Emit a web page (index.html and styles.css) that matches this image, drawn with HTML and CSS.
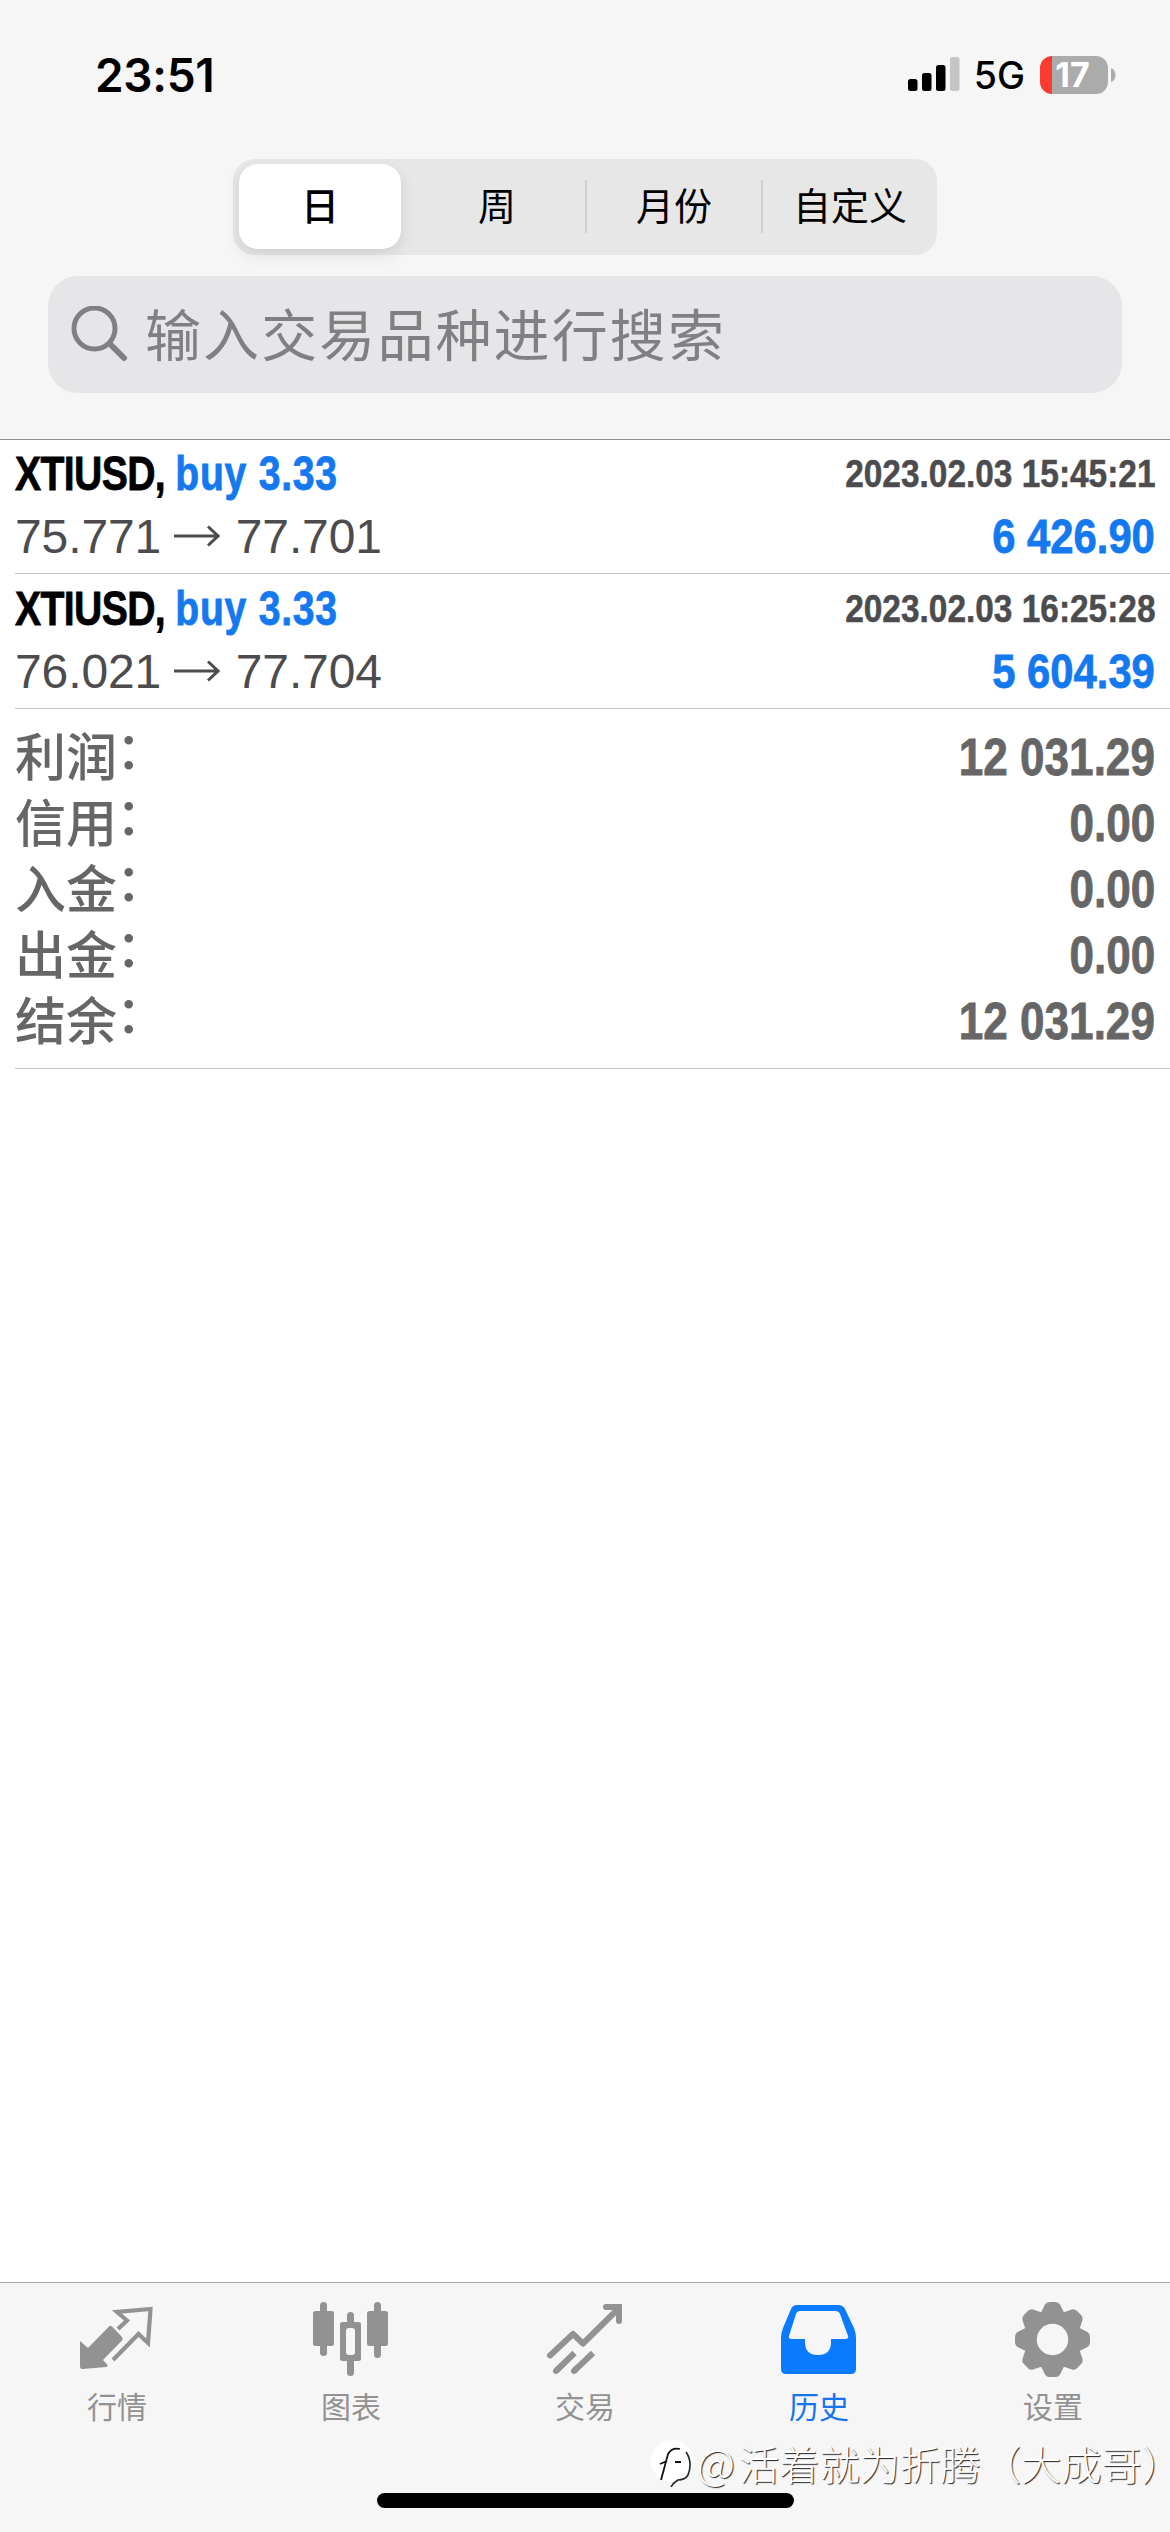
FILE: index.html
```html
<!DOCTYPE html>
<html lang="zh-CN">
<head>
<meta charset="utf-8">
<title>历史</title>
<link rel="stylesheet" href="styles.css">
</head>
<body>
<div class="screen">
  <header class="header">
    <div class="status">
      <span class="clock">23:51</span>
      <div class="status-right">
        <svg class="signal" width="52" height="36" viewBox="0 0 52 36">
          <rect x="0" y="22" width="9.500" height="12" rx="2.500"/>
          <rect x="14" y="16" width="9.500" height="18" rx="2.500"/>
          <rect x="28" y="8" width="9.500" height="26" rx="2.500"/>
          <rect x="42" y="0" width="9.500" height="34" rx="2.500" fill="#c5c5c5"/>
        </svg>
        <span class="network">5G</span>
        <div class="battery"><span class="level">17</span></div>
        <svg class="battery-cap" width="5" height="14" viewBox="0 0 5 14"><path d="M0 0C6 2 6 12 0 14Z" fill="#ababab"/></svg>
      </div>
    </div>
    <nav class="segments">
      <span class="segment active">日</span>
      <span class="segment">周</span>
      <span class="segment divided">月份</span>
      <span class="segment divided">自定义</span>
    </nav>
    <div class="search">
      <svg width="58" height="58" viewBox="0 0 58 58" fill="none" stroke="#808083" stroke-linecap="round">
        <circle cx="23.500" cy="22.500" r="20.500" stroke-width="5"/>
        <path d="M39 38L53 52" stroke-width="6"/>
      </svg>
      <span class="placeholder">输入交易品种进行搜索</span>
    </div>
  </header>

  <main class="content">
    <section class="deal">
      <div class="line">
        <span class="title"><span class="symbol">XTIUSD, </span><span class="side">buy 3.33</span></span>
        <span class="date">2023.02.03 15:45:21</span>
      </div>
      <div class="line">
        <span class="prices">75.771 <svg class="arrow" width="46" height="22" viewBox="0 0 46 22"><path d="M0 11H44M34 1.500L44 11L34 20.500"/></svg> 77.701</span>
        <span class="profit">6 426.90</span>
      </div>
    </section>
    <section class="deal">
      <div class="line">
        <span class="title"><span class="symbol">XTIUSD, </span><span class="side">buy 3.33</span></span>
        <span class="date">2023.02.03 16:25:28</span>
      </div>
      <div class="line">
        <span class="prices">76.021 <svg class="arrow" width="46" height="22" viewBox="0 0 46 22"><path d="M0 11H44M34 1.500L44 11L34 20.500"/></svg> 77.704</span>
        <span class="profit">5 604.39</span>
      </div>
    </section>
    <section class="summary">
      <div class="total"><span class="label">利润<i>：</i></span><span class="value">12 031.29</span></div>
      <div class="total"><span class="label">信用<i>：</i></span><span class="value">0.00</span></div>
      <div class="total"><span class="label">入金<i>：</i></span><span class="value">0.00</span></div>
      <div class="total"><span class="label">出金<i>：</i></span><span class="value">0.00</span></div>
      <div class="total"><span class="label">结余<i>：</i></span><span class="value">12 031.29</span></div>
    </section>
  </main>

  <footer class="footer">
    <nav class="tabs">
      <div class="tab">
        <svg width="80" height="80" viewBox="0 0 80 80">
          <path d="M3 32L11 39L32 17.500Q33.500 16 35 17.500L45 28Q46.500 30 45 31.500L26 51L30.500 56Q31 58 29 58L6 60Q3 60.500 3 57Z" fill="#929292"/>
          <path d="M41 19L50 10.500L40 2L73.500 -1L71 33L61.500 24L36 50" fill="none" stroke="#929292" stroke-width="4.200" transform="translate(0,1)"/>
        </svg>
        <span>行情</span>
      </div>
      <div class="tab">
        <svg width="80" height="80" viewBox="0 0 80 80" fill="#929292">
          <rect x="2" y="2" width="21" height="35" rx="2.500"/><rect x="9" y="-7" width="7" height="54" rx="3.500"/>
          <rect x="56" y="2" width="21" height="35" rx="2.500"/><rect x="63" y="-7" width="7" height="56" rx="3.500"/>
          <rect x="36" y="3" width="7" height="64" rx="3.500"/><rect x="29" y="13" width="21" height="39" rx="2.500"/>
          <rect x="35" y="19" width="9" height="27" rx="3" fill="#f6f6f6"/>
        </svg>
        <span>图表</span>
      </div>
      <div class="tab">
        <svg width="80" height="80" viewBox="0 0 80 80" fill="none" stroke="#929292" stroke-width="6" stroke-linecap="round" stroke-linejoin="round">
          <path d="M5 46.500L28 25L38 34.500L72 1"/>
          <path d="M61 -2H74V12" stroke-linejoin="miter"/>
          <path d="M11 62L29.500 44M29 62L48 44" stroke-linecap="butt"/>
          <path d="M11 62L13 60M29 62L31 60"/>
        </svg>
        <span>交易</span>
      </div>
      <div class="tab current">
        <svg width="80" height="80" viewBox="0 0 80 80">
          <path d="M18-4H59Q64-4 66 0L75 19Q77 24 77 29V60Q77 65 72 65H7Q2 65 2 60V29Q2 24 4 19L12 0Q14-4 18-4Z" fill="#0a7aff"/>
          <path d="M21 2H56Q60 2 61 5L69 27Q70 30 66 30H52V33Q52 46 39 46Q26 46 26 33V30H13Q9 30 10 27L17 5Q18 2 21 2Z" fill="#f6f6f6"/>
        </svg>
        <span>历史</span>
      </div>
      <div class="tab">
        <svg width="80" height="80" viewBox="0 0 80 80" fill="#929292">
          <g transform="translate(39.500,30.500)">
            <circle r="29.500"/>
            <g id="teeth">
              <path id="tooth" d="M-12-26L-7.500-35Q-6-37.500-3-37.500H3Q6-37.500 7.500-35L12-26Z"/>
              <use href="#tooth" transform="rotate(45)"/><use href="#tooth" transform="rotate(90)"/><use href="#tooth" transform="rotate(135)"/>
            </g>
            <use href="#teeth" transform="rotate(180)"/>
            <circle r="15.700" fill="#f6f6f6"/>
          </g>
        </svg>
        <span>设置</span>
      </div>
    </nav>
    <div class="home-indicator"></div>
  </footer>

  <div class="watermark">
    <svg width="46" height="48" viewBox="0 0 46 48" fill="none">
      <circle cx="21" cy="22" r="21" fill="#fff"/>
      <path d="M10 41L17 15Q21 8 29 10M9 25L16 22M24 23H30" stroke="#111" stroke-width="1.800"/>
      <path d="M35 13Q42 23 37 36Q34 41 27 41Q22 44 20 48" stroke="#222" stroke-width="1.600"/>
    </svg>
    <span class="author"><span class="at">@</span>活着就为折腾（大成哥<span class="half">）</span></span>
  </div>
</div>
</body>
</html>
```
FILE: styles.css
```css
* { box-sizing: border-box; }

body {
  margin: 0;
  background: #fff;
  font-family: "Liberation Sans", "Noto Sans CJK SC", sans-serif;
}

.screen {
  position: relative;
  display: flex;
  flex-direction: column;
  width: 1170px;
  height: 2532px;
  overflow: hidden;
}

/* Header */
.header {
  display: flex;
  flex-direction: column;
  align-items: center;
  height: 440px;
  background: #f6f6f6;
  border-bottom: 1px solid #8e8e8e;
}

.status {
  display: flex;
  justify-content: space-between;
  align-items: center;
  width: 100%;
  height: 159px;
  padding: 0 54px 9px 95px;
  font-family: Inter, sans-serif;
  color: #000;
}

.clock { font-size: 46px; font-weight: 600; letter-spacing: -.3px; }

.status-right { display: flex; align-items: center; }
.network { margin: 1px 15px 0 14px; font-size: 37.500px; font-weight: 500; }

.battery {
  width: 68px;
  height: 38px;
  border-radius: 12px;
  background: linear-gradient(90deg, #fc3b30 12px, #ababab 12px);
  text-align: center;
}
.level {
  display: block;
  margin-left: -3px;
  color: #fff;
  font-size: 34px;
  font-weight: 700;
  line-height: 38px;
}
.battery-cap { margin-left: 3px; }

.segments {
  display: grid;
  grid-template-columns: repeat(4, 1fr);
  width: 704px;
  height: 96px;
  padding: 5px 0;
  border-radius: 22px;
  background: #e7e7e7;
}
.segment {
  display: flex;
  justify-content: center;
  height: 85px;
  color: #000;
  font-family: "Noto Sans CJK SC", sans-serif;
  font-size: 38px;
  line-height: 80px;
}
.segment.active {
  width: 162px;
  margin-left: 6px;
  border-radius: 19px;
  background: #fff;
  box-shadow: 0 6px 16px rgba(0, 0, 0, .1);
  font-weight: 500;
}
.segment.divided {
  padding-left: 2px;
  background: linear-gradient(#cfcfcf, #cfcfcf) 0 16px / 2px 53px no-repeat;
}

.search {
  display: flex;
  align-items: center;
  gap: 16px;
  width: 1074px;
  height: 117px;
  margin-top: 21px;
  padding: 0 23px;
  border-radius: 30px;
  background: #e6e6e8;
}
.placeholder {
  margin-top: -6px;
  color: #808083;
  font-family: "Noto Sans CJK SC", sans-serif;
  font-size: 56px;
  letter-spacing: 2.1px;
}

/* Deals */
.deal {
  height: 135px;
  margin-left: 15px;
  padding: 5px 15px 0 0;
  border-bottom: 1px solid #c4c4c6;
}
.deal:first-child { height: 134px; padding-top: 4px; }

.line {
  display: flex;
  justify-content: space-between;
  height: 63px;
  line-height: 60px;
  font-size: 48px;
  white-space: nowrap;
}
.title {
  font-weight: 700;
  transform: scaleX(.815);
  transform-origin: left;
  -webkit-text-stroke: .8px;
}
.symbol { color: #000; letter-spacing: -.75px; white-space: pre; }
.side { color: #1479ef; letter-spacing: .9px; }
.date {
  color: #4c4c4e;
  font-size: 38.5px;
  font-weight: 700;
  line-height: 59px;
  transform: scaleX(.868);
  transform-origin: right;
  -webkit-text-stroke: .5px;
}
.prices { color: #4c4c4e; letter-spacing: -.1px; }
.arrow {
  margin-right: 2px;
  fill: none;
  stroke: #4c4c4e;
  stroke-width: 3;
  vertical-align: 6px;
}
.profit {
  color: #1479ef;
  font-weight: 700;
  transform: scaleX(.87);
  transform-origin: right;
  -webkit-text-stroke: .8px;
}

/* Totals */
.summary {
  margin-left: 15px;
  padding: 16px 15px 13px 0;
  border-bottom: 1px solid #c4c4c6;
}
.total {
  display: flex;
  justify-content: space-between;
  height: 66px;
  color: #666;
  font-size: 51px;
  line-height: 66px;
}
.label {
  margin-top: -4px;
  font-family: "Noto Sans CJK SC", sans-serif;
  font-weight: 500;
}
.label i {
  display: inline-block;
  font-style: normal;
  transform: translate(-1px, -7px);
}
.value {
  font-weight: 700;
  transform: scaleX(.864);
  transform-origin: right;
  -webkit-text-stroke: .8px;
}

/* Tab bar */
.footer {
  display: flex;
  flex-direction: column;
  align-items: center;
  height: 250px;
  margin-top: auto;
  background: #f6f6f6;
  border-top: 1px solid #a9a9ab;
}
.tabs {
  display: grid;
  grid-template-columns: repeat(5, 1fr);
  width: 100%;
  height: 210px;
}
.tab {
  display: flex;
  flex-direction: column;
  align-items: center;
  padding-top: 26px;
  color: #929292;
  font-family: "Noto Sans CJK SC", sans-serif;
  font-size: 30px;
  line-height: 44px;
}
.tab svg { overflow: visible; }
.tab span { margin-top: -6px; }
.tab.current { color: #1674ee; }

.home-indicator {
  width: 417px;
  height: 15px;
  border-radius: 8px;
  background: #000;
}

.watermark {
  position: absolute;
  right: 8px;
  bottom: 39px;
  display: flex;
  align-items: center;
  color: #fff;
  font-family: "Noto Sans CJK SC", sans-serif;
  font-size: 40.3px;
  font-weight: 300;
  line-height: 60px;
  text-shadow: 1px 1px 1px #222;
}
.at { margin-right: 4px; font-size: 42px; }
.half { font-feature-settings: "halt"; }
```
